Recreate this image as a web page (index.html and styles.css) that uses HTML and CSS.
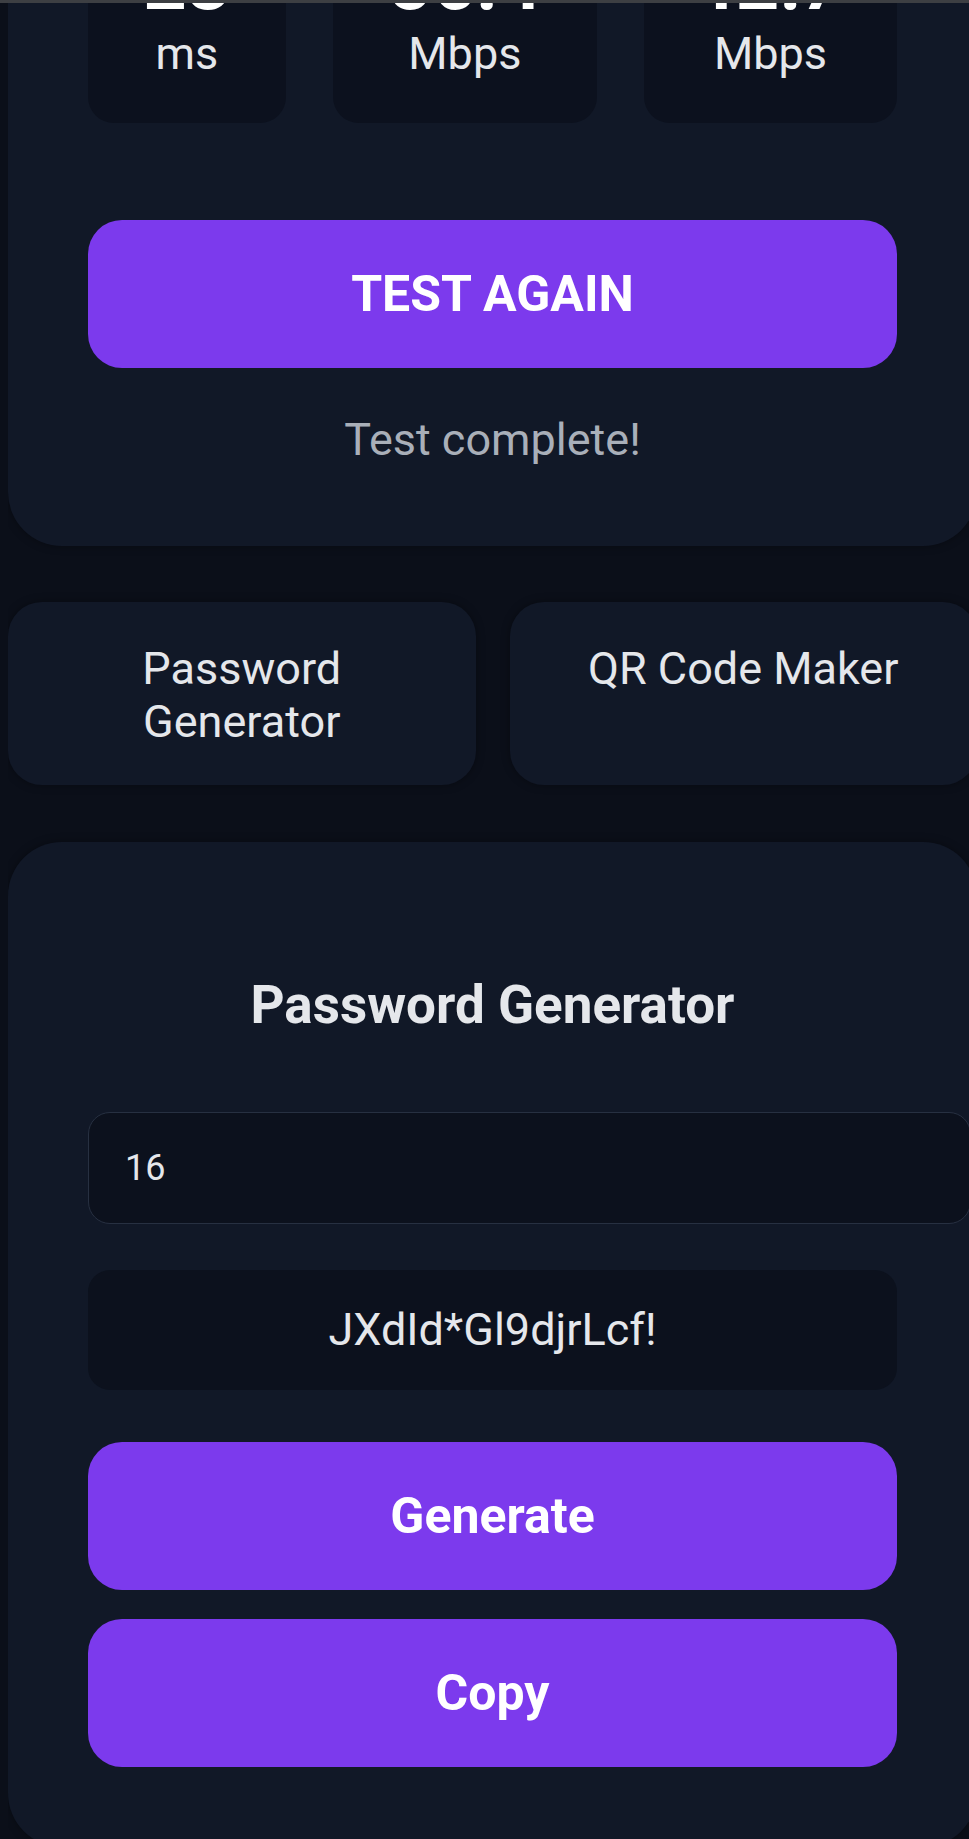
FILE: index.html
```html
<!DOCTYPE html>
<html>
<head>
  <meta charset="utf-8">
  <title>Speed Test &amp; Tools</title>
  <link rel="stylesheet" href="styles.css">
</head>
<body>
  <div class="topbar"></div>
  <div class="app">
    <section class="card">
      <div class="stats">
        <div class="stat">
          <div class="stat-value">23</div>
          <div class="stat-unit">ms</div>
        </div>
        <div class="stat">
          <div class="stat-value">56.4</div>
          <div class="stat-unit">Mbps</div>
        </div>
        <div class="stat">
          <div class="stat-value">12.7</div>
          <div class="stat-unit">Mbps</div>
        </div>
      </div>
      <button class="btn btn-test">TEST AGAIN</button>
      <p class="status">Test complete!</p>
    </section>

    <nav class="tools">
      <button class="tool">Password Generator</button>
      <button class="tool">QR Code Maker</button>
    </nav>

    <section class="card card-pass">
      <h2>Password Generator</h2>
      <input type="number" id="length" class="field" value="16">
      <div id="result" class="result">JXdId*Gl9djrLcf!</div>
      <button id="genBtn" class="btn">Generate</button>
      <button id="copyBtn" class="btn btn-copy">Copy</button>
    </section>
  </div>

  <script>
    var chars = "ABCDEFGHIJKLMNOPQRSTUVWXYZabcdefghijklmnopqrstuvwxyz0123456789!@#$%^&*";

    document.getElementById('genBtn').addEventListener('click', function() {
      var len = parseInt(document.getElementById('length').value, 10) || 16;
      var out = '';
      for (var i = 0; i < len; i++) {
        out += chars.charAt(Math.floor(Math.random() * chars.length));
      }
      document.getElementById('result').textContent = out;
    });

    document.getElementById('copyBtn').addEventListener('click', function() {
      navigator.clipboard.writeText(document.getElementById('result').textContent);
    });
  </script>
</body>
</html>
```

FILE: styles.css
```css
/* Page */
html {
  overflow: hidden;
}

body {
  margin: 0 0 0 8px;
  background-color: #0b0f19;
  color: #e5e7eb;
  font-family: Roboto, "Liberation Sans", sans-serif;
}

.topbar {
  position: fixed;
  top: 0;
  left: 0;
  right: 0;
  height: 3px;
  background-color: #3d3f43;
  z-index: 10;
}

/* page is scrolled down a bit */
.app {
  width: 100vw;
  margin-top: -181px;
}

.card {
  box-sizing: border-box;
  background-color: #111827;
  border-radius: 54px;
  padding: 80px;
  box-shadow: 0 0 8px rgba(0, 0, 0, 0.35);
}

/* Speed results */
.stats {
  display: flex;
  gap: 47px;
}

.stat {
  flex: 1 1 auto;
  background-color: #0c111e;
  border-radius: 26px;
  padding: 40px 50px 44px;
  text-align: center;
}

.stat-value {
  font-size: 76px;
  font-weight: bold;
  line-height: 89px;
  color: #fff;
  font-variant-numeric: proportional-nums;
}

.stat-unit {
  font-size: 45px;
  line-height: 51px;
}

.btn {
  display: block;
  width: 100%;
  padding: 45px 0;
  border: none;
  border-radius: 34px;
  background-color: #7c3aed;
  color: #fff;
  font-family: inherit;
  font-size: 50px;
  font-weight: bold;
  line-height: 58px;
  cursor: pointer;
}

.btn:hover {
  background-color: #6d28d9;
}

.btn-test {
  margin-top: 97px;
}

.status {
  margin: 46px 0 0;
  font-size: 45px;
  line-height: 52px;
  text-align: center;
  color: #a9afb9;
}

/* Tool switcher */
.tools {
  display: grid;
  grid-template-columns: 1fr 1fr;
  gap: 34px;
  margin: 56px 0 57px;
}

.tool {
  background-color: #111827;
  border: none;
  border-radius: 34px;
  padding: 40px 68px 37px;
  color: #e5e7eb;
  font-family: inherit;
  font-size: 45px;
  line-height: 1.18;
  text-align: center;
  display: flex;
  align-items: flex-start;
  justify-content: center;
  box-shadow: 0 0 8px rgba(0, 0, 0, 0.35);
  cursor: pointer;
}

/* Password generator */
.card-pass h2 {
  margin: 53px 0 76px;
  font-size: 53px;
  line-height: 61px;
  text-align: center;
  color: #e5e7eb;
}

.field {
  display: block;
  width: 100%;
  margin: 0;
  padding: 34px 36px;
  border: 1px solid #273041;
  border-radius: 22px;
  background-color: #0c111d;
  color: #e5e7eb;
  font-family: inherit;
  font-size: 36px;
  line-height: 42px;
  -moz-appearance: textfield;
}

.field::-webkit-outer-spin-button,
.field::-webkit-inner-spin-button {
  -webkit-appearance: none;
  margin: 0;
}

.result {
  margin-top: 46px;
  padding: 34px 0;
  border-radius: 22px;
  background-color: #0c111d;
  font-size: 45px;
  line-height: 52px;
  text-align: center;
}

.card-pass .btn {
  margin-top: 52px;
}

.card-pass .btn-copy {
  margin-top: 29px;
}
```
